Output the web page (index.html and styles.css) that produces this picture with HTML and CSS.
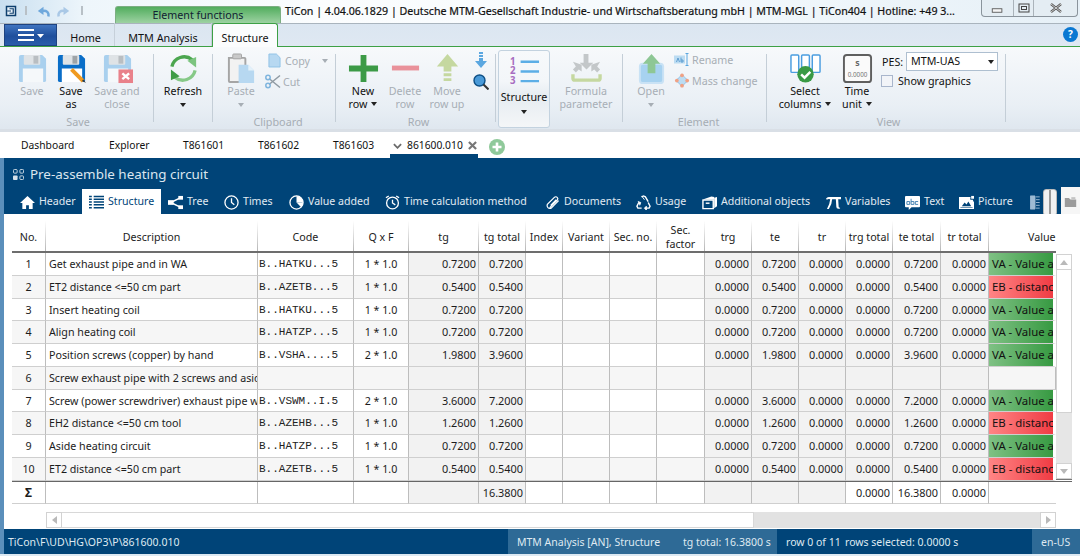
FILE: index.html
```html
<!DOCTYPE html>
<html lang="en">
<head>
<meta charset="utf-8">
<title>TiCon</title>
<link rel="stylesheet" href="styles.css">
</head>
<body>
<div class="app">
  <header class="titlebar">
    <svg class="qa-app" viewBox="0 0 16 16"><rect x="1" y="1" width="14" height="14" fill="#0d3f6e"/><rect x="3" y="3" width="10" height="10" fill="#e8f2fa"/><path d="M6 5h5v6H6M3 8h5" fill="none" stroke="#0d3f6e" stroke-width="1.6"/></svg>
    <span class="qa-sep"></span>
    <svg class="qa-undo" viewBox="0 0 16 16"><path d="M14 13c1-5-2-8-8-7" fill="none" stroke="#6fa8dc" stroke-width="3"/><path d="M8 1L1 6l7 5z" fill="#6fa8dc"/></svg>
    <svg class="qa-redo" viewBox="0 0 16 16"><path d="M2 13c-1-5 2-8 8-7" fill="none" stroke="#a9c8e6" stroke-width="3"/><path d="M8 1l7 5-7 5z" fill="#a9c8e6"/></svg>
    <span class="qa-sep"></span>
    <div class="ctx-tab">Element functions</div>
    <div class="title-text">TiCon | 4.04.06.1829 | Deutsche MTM-Gesellschaft Industrie- und Wirtschaftsberatung mbH | MTM-MGL | TiCon404 | Hotline: +49 3...</div>
    <div class="winbtns">
      <span class="wb wb-min"><svg viewBox="0 0 14 8"><rect x="1" y="2" width="11" height="4" fill="#f4f4f4" stroke="#555"/></svg></span>
      <span class="wb wb-max"><svg viewBox="0 0 12 10"><rect x="1" y="1" width="10" height="8" fill="none" stroke="#444"/><rect x="3.500" y="3.500" width="5" height="3" fill="none" stroke="#444"/></svg></span>
      <span class="wb wb-close"><svg viewBox="0 0 12 10"><path d="M1 1l10 8M11 1L1 9" stroke="#555" stroke-width="2.400"/><path d="M1 1l10 8M11 1L1 9" stroke="#eee" stroke-width="0.800"/></svg></span>
    </div>
  </header>

  <nav class="tabrow">
    <div class="menubtn"><svg viewBox="0 0 26 12"><path d="M0 1h16M0 6h16M0 11h16" stroke="#fff" stroke-width="2"/><path d="M19 5h7l-3.500 4z" fill="#fff"/></svg></div>
    <div class="rtab rtab-home">Home</div>
    <div class="rtab rtab-mtm">MTM Analysis</div>
    <div class="rtab rtab-on">Structure</div>
    <div class="help">?</div>
  </nav>

  <section class="ribbon">
    <div class="grp g-save">
      <div class="btn off"><svg class="ico" viewBox="0 0 32 32"><path d="M2 4a2 2 0 0 1 2-2h22l4 4v22a2 2 0 0 1-2 2H4a2 2 0 0 1-2-2z" fill="#a9d0ee"/><rect x="7" y="2" width="17" height="10" rx="1" fill="#dfe3e6"/><rect x="17" y="3" width="5" height="8" fill="#b9bec2"/><rect x="6" y="16" width="21" height="14" fill="#f5f8fa"/></svg><span>Save</span></div>
      <div class="btn"><svg class="ico" viewBox="0 0 32 32"><path d="M2 4a2 2 0 0 1 2-2h22l4 4v22a2 2 0 0 1-2 2H4a2 2 0 0 1-2-2z" fill="#0a6ec8"/><rect x="7" y="2" width="17" height="10" rx="1" fill="#dfe3e6"/><rect x="17" y="3" width="5" height="8" fill="#9ea4a8"/><rect x="6" y="16" width="21" height="14" fill="#fff"/><path d="M16 17l12 12" stroke="#f09a20" stroke-width="4"/><path d="M28 27l3 4-4-2z" fill="#333"/></svg><span>Save<br>as</span></div>
      <div class="btn off"><svg class="ico" viewBox="0 0 32 32"><path d="M2 4a2 2 0 0 1 2-2h22l4 4v22a2 2 0 0 1-2 2H4a2 2 0 0 1-2-2z" fill="#a9d0ee"/><rect x="7" y="2" width="17" height="10" rx="1" fill="#dfe3e6"/><rect x="17" y="3" width="5" height="8" fill="#b9bec2"/><rect x="6" y="16" width="21" height="14" fill="#f5f8fa"/><rect x="17" y="17" width="15" height="14" fill="#e9818a"/><path d="M21 21l7 6M28 21l-7 6" stroke="#fff" stroke-width="2.500"/></svg><span>Save and<br>close</span></div>
      <div class="glabel">Save</div>
    </div>
    <i class="sep"></i>
    <div class="grp g-refresh">
      <div class="btn"><svg class="ico" viewBox="0 0 32 32"><path d="M25 7A13 13 0 0 0 4 14" fill="none" stroke="#4ca64f" stroke-width="3.400"/><path d="M7 25a13 13 0 0 0 21-7" fill="none" stroke="#86c987" stroke-width="3.400"/><path d="M3 28l0-11 9 7z" fill="#3f9c45"/><path d="M29 4l0 11-9-7z" fill="#7cc47f"/></svg><span>Refresh</span><b class="arr"></b></div>
    </div>
    <i class="sep"></i>
    <div class="grp g-clip">
      <div class="btn off"><svg class="ico" viewBox="0 0 32 32"><path d="M3 5h16a1 1 0 0 1 1 1v24H4a1 1 0 0 1-1-1z" fill="#f2f2f2" stroke="#a5a5a5" stroke-width="2"/><rect x="7" y="1" width="9" height="5" rx="1" fill="#c9c9c9" stroke="#a5a5a5"/><path d="M13 12h10l6 6v13H13z" fill="#b7d8f1"/><path d="M23 12v6h6z" fill="#e4f1fa"/></svg><span>Paste</span><b class="arr"></b></div>
      <div class="smalls">
        <div class="sm off sm-copy"><svg class="ic14" viewBox="0 0 14 16"><path d="M1 1h8l4 4v10H1z" fill="#b7d8f1" stroke="#8fc1e6"/></svg><span>Copy</span><b class="arr arr-copy"></b></div>
        <div class="sm off sm-cut"><svg class="ic16" viewBox="0 0 16 14"><path d="M15 1L4 10M15 13L4 4" stroke="#8f9aa3" stroke-width="1.500"/><circle cx="3" cy="3" r="2.200" fill="none" stroke="#7fb5de" stroke-width="1.500"/><circle cx="3" cy="11" r="2.200" fill="none" stroke="#7fb5de" stroke-width="1.500"/></svg><span>Cut</span></div>
      </div>
      <div class="glabel">Clipboard</div>
    </div>
    <i class="sep"></i>
    <div class="grp g-row">
      <div class="btn"><svg class="ico" viewBox="0 0 32 32"><path d="M13 2h6v11h12v6H19v11h-6V19H1v-6h12z" fill="#3c9a46"/></svg><span>New<br>row<b class="arr arr-in"></b></span></div>
      <div class="btn off"><svg class="ico" viewBox="0 0 32 32"><rect x="2" y="13" width="28" height="5" fill="#e9919a"/></svg><span>Delete<br>row</span></div>
      <div class="btn off"><svg class="ico" viewBox="0 0 32 32"><path d="M16 1l11 13h-7v5h-8v-5H5z" fill="#c5d8a0"/><path d="M12 21h8v3h-8zM12 26h8v3h-8z" fill="#c5d8a0"/></svg><span>Move<br>row up</span></div>
      <div class="tools">
        <svg class="tool" viewBox="0 0 16 16"><path d="M6 0h4v2H6zM6 3h4v2H6zM6 6h4v3h4l-6 7-6-7h4z" fill="#5ba7e0"/></svg>
        <svg class="tool" viewBox="0 0 16 16"><circle cx="6.500" cy="6.500" r="5.500" fill="#4a9ad8" stroke="#0d4f85" stroke-width="1.400"/><path d="M10.500 10.500l5 5" stroke="#333" stroke-width="2"/></svg>
      </div>
      <div class="glabel">Row</div>
    </div>
    <i class="sep"></i>
    <div class="grp g-struct">
      <div class="bigbtn"><svg class="ico ico-s" viewBox="0 0 32 32"><text x="1" y="10" class="num123">1</text><text x="1" y="20" class="num123">2</text><text x="1" y="30" class="num123">3</text><path d="M12 7h19M12 17h19M12 27h19" stroke="#5caee6" stroke-width="2.500"/></svg><span>Structure</span><b class="arr"></b></div>
      <div class="btn off"><svg class="ico" viewBox="0 0 32 32"><path d="M13 1h5v9h5l-7 7-7-7h4z" fill="#c3c7c9"/><path d="M2 9l9 3 0 7-3-2-3 3-3-3 3-3z" fill="#c3c7c9"/><path d="M30 9l-9 3 0 7 3-2 3 3 3-3-3-3z" fill="#c3c7c9"/><path d="M2 22v4a2 2 0 0 0 2 2h24a2 2 0 0 0 2-2v-4" fill="none" stroke="#c5d8a0" stroke-width="3.500"/></svg><span>Formula<br>parameter</span></div>
    </div>
    <i class="sep"></i>
    <div class="grp g-elem">
      <div class="btn off"><svg class="ico" viewBox="0 0 32 32"><rect x="4" y="11" width="24" height="20" rx="3" fill="#a7d2f0" stroke="#c9e2f5" stroke-width="2"/><path d="M16 1l9 10h-5v10h-8V11H7z" fill="#8ec795"/></svg><span>Open</span><b class="arr"></b></div>
      <div class="smalls">
        <div class="sm off sm-ren"><svg class="ic16" viewBox="0 0 16 14"><rect x="0" y="3" width="11" height="8" fill="#bcdcf2"/><path d="M2.500 9.500l1.500-4 1.500 4M7 5v4.500h2v-2H7" fill="none" stroke="#4a8fc9" stroke-width="0.800"/><path d="M13 1v12M11.500 1h3M11.500 13h3" stroke="#5ba7e0"/></svg><span>Rename</span></div>
        <div class="sm off sm-mass"><svg class="ic16" viewBox="0 0 16 16"><path d="M8 1l3 4 4 3-4 3-3 4-3-4-4-3 4-3z" fill="#bcdcf2" stroke="#8fc1e6"/><circle cx="8" cy="2.500" r="2" fill="#f0a184"/><circle cx="8" cy="13.500" r="2" fill="#f0a184"/><circle cx="2.500" cy="8" r="2" fill="#f0a184"/><circle cx="13.500" cy="8" r="2" fill="#f0a184"/></svg><span>Mass change</span></div>
      </div>
      <div class="glabel">Element</div>
    </div>
    <i class="sep"></i>
    <div class="grp g-view">
      <div class="btn"><svg class="ico ico-w" viewBox="0 0 32 32"><rect x="1" y="2" width="8" height="18" rx="1" fill="#fff" stroke="#4a9de0" stroke-width="1.500"/><rect x="12" y="2" width="8" height="18" rx="1" fill="#fff" stroke="#4a9de0" stroke-width="1.500"/><rect x="23" y="2" width="8" height="18" rx="1" fill="#fff" stroke="#4a9de0" stroke-width="1.500"/><circle cx="16" cy="22" r="8.500" fill="#3a9a46"/><path d="M11.500 22l3.500 3.500 6-6" fill="none" stroke="#fff" stroke-width="2.500"/></svg><span>Select<br>columns<b class="arr arr-in"></b></span></div>
      <div class="btn"><svg class="ico" viewBox="0 0 32 32"><rect x="2" y="2" width="28" height="28" rx="3" fill="#fafafa" stroke="#5f5f5f" stroke-width="2"/><text x="16" y="13" class="t-s">s</text><text x="16" y="25" class="t-n">0.0000</text></svg><span>Time<br>unit<b class="arr arr-in"></b></span></div>
      <div class="pes">
        <div class="pes-row"><label class="pes-l">PES:</label><div class="select">MTM-UAS<b class="arr arr-sel"></b></div></div>
        <div class="chk-row"><i class="chk"></i><span>Show graphics</span></div>
      </div>
      <div class="glabel">View</div>
    </div>
    <i class="sep"></i>
  </section>

  <div class="doctabs">
    <div class="dt dt1">Dashboard</div>
    <div class="dt dt2">Explorer</div>
    <div class="dt dt3">T861601</div>
    <div class="dt dt4">T861602</div>
    <div class="dt dt5">T861603</div>
    <div class="dt dt-on">
      <svg class="chev" viewBox="0 0 10 6"><path d="M1 1l4 4 4-4" fill="none" stroke="#6b6b6b" stroke-width="2"/></svg>
      <span>861600.010</span>
      <svg class="xx" viewBox="0 0 10 10"><path d="M1 1l8 8M9 1L1 9" stroke="#777" stroke-width="2.400"/></svg>
    </div>
    <svg class="plus" viewBox="0 0 16 16"><circle cx="8" cy="8" r="8" fill="#8fc99a"/><path d="M8 3.500v9M3.500 8h9" stroke="#fff" stroke-width="2.600"/></svg>
  </div>

  <section class="band">
    <div class="band-title">
      <svg class="squares" viewBox="0 0 12 12"><rect x="0.500" y="0.500" width="4" height="4" rx="1" fill="none" stroke="#d5e1ea"/><rect x="7.500" y="0.500" width="4" height="4" rx="1" fill="none" stroke="#d5e1ea"/><rect x="0" y="7" width="5" height="5" rx="1" fill="#d5e1ea"/><rect x="7.500" y="7.500" width="4" height="4" rx="1" fill="none" stroke="#d5e1ea"/></svg>
      <h1>Pre-assemble heating circuit</h1>
    </div>
    <div class="nav">
      <div class="ni"><svg viewBox="0 0 16 16"><path d="M8 1L0 8.500h2.500V15h4v-4h3v4h4V8.500H16z" fill="#fff"/></svg><span>Header</span></div>
      <div class="ni ni-on"><svg viewBox="0 0 16 16"><path d="M0 1.500h3M5 1.500h11M0 4.500h3M5 4.500h11M0 7.500h3M5 7.500h11M0 10.500h3M5 10.500h11M0 13.500h3M5 13.500h11" stroke="#004478" stroke-width="1.600"/></svg><span>Structure</span></div>
      <div class="ni"><svg viewBox="0 0 16 16"><path d="M3 8l10-5M3 8l10 5" stroke="#fff" stroke-width="1.500"/><rect x="0" y="5.500" width="6" height="5" fill="#fff"/><rect x="11" y="1" width="5" height="4" fill="#fff"/><rect x="11" y="11" width="5" height="4" fill="#fff"/></svg><span>Tree</span></div>
      <div class="ni"><svg viewBox="0 0 16 16"><circle cx="8" cy="8" r="7" fill="none" stroke="#fff" stroke-width="1.400"/><path d="M8 3.500V8l3 2.500" fill="none" stroke="#fff" stroke-width="1.400"/></svg><span>Times</span></div>
      <div class="ni"><svg viewBox="0 0 16 16"><circle cx="8" cy="8" r="7" fill="none" stroke="#fff" stroke-width="1.400"/><path d="M8 8V1a7 7 0 0 1 7 7z" fill="#fff"/><path d="M8 8l7 0a7 7 0 0 1-2 5z" fill="#fff"/></svg><span>Value added</span></div>
      <div class="ni"><svg viewBox="0 0 16 16"><circle cx="8" cy="8.500" r="6.300" fill="none" stroke="#fff" stroke-width="1.400"/><path d="M8 5v3.500l3 2M1 3l3-2M12 1l3 2" fill="none" stroke="#fff" stroke-width="1.400"/></svg><span>Time calculation method</span></div>
      <div class="ni"><svg viewBox="0 0 16 16"><path d="M5 13.500l8-8a2 2 0 0 0-3-3L2.500 10a3 3 0 0 0 4 4l8-8M6 11l6-6" fill="none" stroke="#fff" stroke-width="1.300"/></svg><span>Documents</span></div>
      <div class="ni"><svg viewBox="0 0 16 16"><path d="M6 2l2-1 2 1 3 5M3 8L1 12l1 2h4M10 14h4l1-2-2-4" fill="none" stroke="#fff" stroke-width="1.500"/><path d="M6 1l3 4M2 7l3 1-1 3M11 12l-2 2 2 2z" fill="#fff" stroke="#fff"/></svg><span>Usage</span></div>
      <div class="ni"><svg viewBox="0 0 16 16"><path d="M1 5.500h11v9H1z" fill="none" stroke="#fff" stroke-width="1.500"/><path d="M0 5l10-3.500 3 .5v3z" fill="#fff"/><path d="M13 3l3-1v10l-3 2z" fill="#fff"/><rect x="4" y="8" width="4" height="1.500" fill="#fff"/></svg><span>Additional objects</span></div>
      <div class="ni"><svg viewBox="0 0 16 16"><path d="M0 4q1-2 3-2h13v2.500h-3l.5 8q0 1 1.500 1v1q-4 1-4-2l-.5-8H6.500Q6.500 10 3 15H1Q4 10 4.500 4.500 2 4 1 5z" fill="#fff"/></svg><span>Variables</span></div>
      <div class="ni"><svg viewBox="0 0 16 16"><path d="M1 1h14a1 1 0 0 1 1 1v10a1 1 0 0 1-1 1H7l-3 3v-3H1a1 1 0 0 1-1-1V2a1 1 0 0 1 1-1z" fill="#fff"/><path d="M2 7h3v3H2zM6.500 4v6h3V7h-3M14 7h-3v3h3" fill="none" stroke="#3f7fb0" stroke-width="1"/></svg><span>Text</span></div>
      <div class="ni"><svg viewBox="0 0 16 16"><path d="M0 2h12v1.500H1.500v10h13V7H16v8H0z" fill="#fff"/><path d="M1 2h11v3h3v8H1z" fill="#fff"/><path d="M3 12l3-4 2 2 2-3 3 5z" fill="#004478"/><rect x="13" y="1" width="3" height="3" fill="#fff"/></svg><span>Picture</span></div>
      <div class="ni"><svg class="ni-last" viewBox="0 0 10 16"><path d="M0 1h5v14H0zM6 2h4M6 5h4M6 8h4M6 11h4M6 14h4" fill="#9dbbd4" stroke="#9dbbd4"/></svg></div>
      <div class="split"><i></i></div>
      <div class="side"><svg viewBox="0 0 16 14"><path d="M1 2h5l2 2h7v9H1z" fill="#9b9b9b"/><path d="M9 1h5v3H9z" fill="#c4c4c4"/></svg></div>
    </div>
  </section>

  <section class="gridwrap">
    <div class="r hd">
      <div>No.</div><div>Description</div><div>Code</div><div>Q x F</div><div>tg</div><div>tg total</div><div>Index</div><div>Variant</div><div>Sec. no.</div><div>Sec.<br>factor</div><div>trg</div><div>te</div><div>tr</div><div>trg total</div><div>te total</div><div>tr total</div><div class="hv">Value added</div>
    </div>
    <div class="bodywrap">
      <div class="rows">
        <div class="r"><div class="ctr">1</div><div>Get exhaust pipe and in WA</div><div class="m">B..HATKU...5</div><div class="ctr">1 * 1.0</div><div class="g n">0.7200</div><div class="g n">0.7200</div><div></div><div></div><div></div><div></div><div class="g n">0.0000</div><div class="g n">0.7200</div><div class="g n">0.0000</div><div class="g n">0.0000</div><div class="g n">0.7200</div><div class="g n">0.0000</div><div class="va">VA - Value added</div></div>
        <div class="r ev"><div class="ctr">2</div><div>ET2 distance &lt;=50 cm part</div><div class="m">B..AZETB...5</div><div class="ctr">1 * 1.0</div><div class="g n">0.5400</div><div class="g n">0.5400</div><div></div><div></div><div></div><div></div><div class="g n">0.0000</div><div class="g n">0.5400</div><div class="g n">0.0000</div><div class="g n">0.0000</div><div class="g n">0.5400</div><div class="g n">0.0000</div><div class="eb">EB - distance</div></div>
        <div class="r"><div class="ctr">3</div><div>Insert heating coil</div><div class="m">B..HATKU...5</div><div class="ctr">1 * 1.0</div><div class="g n">0.7200</div><div class="g n">0.7200</div><div></div><div></div><div></div><div></div><div class="g n">0.0000</div><div class="g n">0.7200</div><div class="g n">0.0000</div><div class="g n">0.0000</div><div class="g n">0.7200</div><div class="g n">0.0000</div><div class="va">VA - Value added</div></div>
        <div class="r ev"><div class="ctr">4</div><div>Align heating coil</div><div class="m">B..HATZP...5</div><div class="ctr">1 * 1.0</div><div class="g n">0.7200</div><div class="g n">0.7200</div><div></div><div></div><div></div><div></div><div class="g n">0.0000</div><div class="g n">0.7200</div><div class="g n">0.0000</div><div class="g n">0.0000</div><div class="g n">0.7200</div><div class="g n">0.0000</div><div class="va">VA - Value added</div></div>
        <div class="r"><div class="ctr">5</div><div>Position screws (copper) by hand</div><div class="m">B..VSHA....5</div><div class="ctr">2 * 1.0</div><div class="g n">1.9800</div><div class="g n">3.9600</div><div></div><div></div><div></div><div></div><div class="g n">0.0000</div><div class="g n">1.9800</div><div class="g n">0.0000</div><div class="g n">0.0000</div><div class="g n">3.9600</div><div class="g n">0.0000</div><div class="va">VA - Value added</div></div>
        <div class="r ev"><div class="ctr">6</div><div>Screw exhaust pipe with 2 screws and aside</div><div></div><div></div><div class="g"></div><div class="g"></div><div></div><div></div><div></div><div></div><div class="g"></div><div class="g"></div><div class="g"></div><div class="g"></div><div class="g"></div><div class="g"></div><div></div></div>
        <div class="r"><div class="ctr">7</div><div>Screw (power screwdriver) exhaust pipe with 2 screws</div><div class="m">B..VSWM..I.5</div><div class="ctr">2 * 1.0</div><div class="g n">3.6000</div><div class="g n">7.2000</div><div></div><div></div><div></div><div></div><div class="g n">0.0000</div><div class="g n">3.6000</div><div class="g n">0.0000</div><div class="g n">0.0000</div><div class="g n">7.2000</div><div class="g n">0.0000</div><div class="va">VA - Value added</div></div>
        <div class="r ev"><div class="ctr">8</div><div>EH2 distance &lt;=50 cm tool</div><div class="m">B..AZEHB...5</div><div class="ctr">1 * 1.0</div><div class="g n">1.2600</div><div class="g n">1.2600</div><div></div><div></div><div></div><div></div><div class="g n">0.0000</div><div class="g n">1.2600</div><div class="g n">0.0000</div><div class="g n">0.0000</div><div class="g n">1.2600</div><div class="g n">0.0000</div><div class="eb">EB - distance</div></div>
        <div class="r"><div class="ctr">9</div><div>Aside heating circuit</div><div class="m">B..HATZP...5</div><div class="ctr">1 * 1.0</div><div class="g n">0.7200</div><div class="g n">0.7200</div><div></div><div></div><div></div><div></div><div class="g n">0.0000</div><div class="g n">0.7200</div><div class="g n">0.0000</div><div class="g n">0.0000</div><div class="g n">0.7200</div><div class="g n">0.0000</div><div class="va">VA - Value added</div></div>
        <div class="r ev"><div class="ctr">10</div><div>ET2 distance &lt;=50 cm part</div><div class="m">B..AZETB...5</div><div class="ctr">1 * 1.0</div><div class="g n">0.5400</div><div class="g n">0.5400</div><div></div><div></div><div></div><div></div><div class="g n">0.0000</div><div class="g n">0.5400</div><div class="g n">0.0000</div><div class="g n">0.0000</div><div class="g n">0.5400</div><div class="g n">0.0000</div><div class="eb">EB - distance</div></div>
      </div>
      <div class="vscroll">
        <div class="sb-btn"><b class="tri tri-up"></b></div>
        <div class="vthumb"></div>
        <div class="sb-btn"><b class="tri tri-dn"></b></div>
      </div>
    </div>
    <div class="dbl"></div>
    <div class="r sum">
      <div class="ctr sigma">&Sigma;</div><div></div><div></div><div></div><div class="g"></div><div class="g n">16.3800</div><div></div><div></div><div></div><div></div><div class="g"></div><div class="g"></div><div class="g"></div><div class="n">0.0000</div><div class="n">16.3800</div><div class="n">0.0000</div><div class="last"></div>
    </div>
    <div class="hscroll">
      <div class="sb-btn h"><b class="tri tri-l"></b></div>
      <div class="hthumb"></div>
      <div class="sb-btn h"><b class="tri tri-r"></b></div>
    </div>
  </section>

  <footer class="status">
    <div class="st-path">TiCon\F\UD\HG\OP3\P\861600.010</div>
    <div class="st-a"><span class="st-a1">MTM Analysis [AN], Structure</span><span>tg total: 16.3800 s</span></div>
    <div class="st-b"><span class="st-b1">row 0 of 11</span><span>rows selected: 0.0000 s</span></div>
    <div class="st-c">en-US</div>
  </footer>
  <div class="foot"></div>
</div>
</body>
</html>
```

FILE: styles.css
```css
* { box-sizing: border-box; }
html, body { margin: 0; padding: 0; }
body {
  width: 1080px; height: 556px; overflow: hidden;
  font-family: "Noto Sans", "Open Sans", sans-serif;
  font-size: 10.700px; color: #1a1a1a; background: #fff;
}
svg { display: block; flex: none; }
.app { display: flex; flex-direction: column; width: 1080px; height: 556px; overflow: hidden; background: #5b8fbb; }

/* title bar */
.titlebar {
  height: 23px; display: flex; align-items: flex-start; position: relative;
  background: linear-gradient(90deg, #c9dff0 0, #eef6fb 8%, #fbfdfe 30%, #f5fafd 60%, #e6f0f7 100%);
  padding-left: 5px;
}
.qa-app { width: 12px; height: 12px; margin-top: 5px; }
.qa-sep { width: 2px; height: 9px; background: #b8c0c6; margin: 6px 0 0 8px; }
.qa-undo { width: 15px; height: 13px; margin: 6px 0 0 9px; }
.qa-redo { width: 15px; height: 13px; margin: 6px 0 0 5px; }
.qa-redo + .qa-sep { margin-left: 10px; }
.ctx-tab {
  position: absolute; left: 115px; top: 6px; width: 166px; height: 17px;
  background: linear-gradient(#52ad5e, #9dd2a2);
  border: 1px solid #7cae82; border-bottom: 0; border-radius: 3px 3px 0 0;
  text-align: center; font-size: 10.700px; line-height: 17px; color: #123;
}
.title-text {
  position: absolute; left: 285px; top: 3px; font-size: 10.650px; line-height: 17px;
  color: #111; white-space: nowrap; -webkit-text-stroke: 0.2px #111;
}
.winbtns {
  position: absolute; left: 981px; top: -1px; width: 97px; height: 18px; display: flex;
  border: 1px solid #8a949c; border-top: 0; border-radius: 0 0 4px 4px; background: #e4edf3;
}
.wb { display: flex; align-items: center; justify-content: center; border-right: 1px solid #aab3ba; }
.wb-min { width: 32px; } .wb-max { width: 20px; } .wb-close { flex: 1; border-right: 0; }
.wb-min svg { width: 13px; height: 7px; margin-top: 5px; }
.wb-max svg { width: 12px; height: 10px; }
.wb-close svg { width: 12px; height: 10px; }

/* ribbon tabs */
.tabrow {
  height: 24px; display: flex; align-items: flex-end; padding-left: 4px; position: relative;
  background: linear-gradient(#dbe6f1, #dfe8f2); border-top: 1px solid #a9b4bd;
  border-bottom: 1px solid #3da045;
}
.menubtn {
  width: 53px; height: 22px; background: linear-gradient(#3f74c0, #1f4f9c 55%, #2a5cab);
  border: 1px solid #1e4380; display: flex; align-items: center; justify-content: center;
}
.menubtn svg { width: 26px; height: 12px; }
.rtab { height: 23px; text-align: center; font-size: 10.800px; line-height: 29px; color: #111; }
.rtab-home { width: 58px; border-right: 1px solid #c6d0da; }
.rtab-mtm { width: 97px; border-right: 1px solid #c6d0da; }
.rtab-on {
  width: 66px; height: 24px; margin-bottom: -1px; line-height: 28px; background: #fbfcfd;
  border: 1px solid #3da045; border-bottom: 0; border-radius: 3px 3px 0 0;
}
.help {
  position: absolute; left: 1063px; top: 3px; width: 15px; height: 15px; border-radius: 50%;
  background: #0a78d2; color: #fff; font-weight: 700; font-size: 10px; line-height: 15px; text-align: center;
}

/* ribbon */
.ribbon {
  height: 85px; display: flex; padding-left: 4px;
  background: linear-gradient(#f7f9fb, #e9eff5 72%, #dfe7ef);
  border-bottom: 3px solid #d9dfe6;
}
.sep { width: 1px; margin: 7px 0 7px; background: #c4ced7; flex: none; }
.grp { display: grid; grid-template-rows: 68px 13px; flex: none; }
.glabel { grid-column: 1 / -1; text-align: center; color: #a6adb4; font-size: 10.800px; line-height: 13px; }
.g-save { width: 149px; grid-template-columns: 40px 38px 54px; padding-left: 8px; }
.g-refresh { width: 58px; grid-template-columns: 1fr; }
.g-clip { width: 122px; grid-template-columns: 40px 1fr; padding-left: 8px; }
.g-row { width: 159px; grid-template-columns: 42px 42px 42px 27px; padding-left: 6px; }
.g-struct { width: 126px; grid-template-columns: 52px 64px; grid-template-rows: 1fr; padding-left: 2px; column-gap: 4px; }
.g-elem { width: 143px; grid-template-columns: 40px 1fr; padding-left: 8px; }
.g-view { width: 238px; grid-template-columns: 66px 38px 1fr; padding-left: 5px; }
.btn {
  display: flex; flex-direction: column; align-items: center; padding-top: 6px;
  text-align: center; font-size: 10.700px; line-height: 12.500px; color: #111; white-space: nowrap;
}
.ico { width: 31px; height: 31px; margin-bottom: 1px; }
.ico-w { width: 31px; }
.btn.off, .sm.off { color: #a7aeb5; }
.arr { display: block; width: 0; height: 0; border: 3px solid transparent; border-top: 4px solid #222; border-bottom: 0; margin-top: 5px; }
.off .arr { border-top-color: #a7aeb5; }
.arr-in { display: inline-block; margin: 0 0 1px 4px; vertical-align: middle; }
.smalls { padding: 6px 0 0 7px; display: flex; flex-direction: column; gap: 6px; }
.sm { display: flex; align-items: center; height: 15px; font-size: 10.700px; white-space: nowrap; }
.ic14 { width: 13px; height: 15px; margin-right: 4px; }
.ic16 { width: 16px; height: 15px; margin-right: 2px; }
.sm-cut { margin-left: -3px; }
.sm-copy span { margin-right: 12px; }
.arr-copy { margin-top: 0; }
.sm-ren, .sm-mass { margin-left: -4px; }
.sm-ren { margin-top: -1px; }
.sm-mass { margin-top: 0; }
.tools { display: flex; flex-direction: column; gap: 6px; padding: 5px 0 0 5px; }
.tool { width: 16px; height: 16px; }
.bigbtn {
  display: flex; flex-direction: column; align-items: center; margin-top: 3px; height: 78px; padding-top: 4px;
  border: 1px solid #c3d2df; border-radius: 3px;
  background: linear-gradient(#f7f9fb 0, #f3f6f9 40%, #e6ecf1 60%, #f4f6f8 100%);
  font-size: 10.700px; line-height: 15px; color: #111; white-space: nowrap;
}
.ico-s { height: 31px; margin-bottom: 4px; }
.num123 { font-size: 10px; font-weight: 700; fill: #a86cc0; font-family: "Noto Sans", sans-serif; }
.t-s { font-size: 9px; font-weight: 700; fill: #666; text-anchor: middle; font-family: "Noto Sans", sans-serif; }
.t-n { font-size: 6.500px; fill: #777; text-anchor: middle; font-family: "Noto Sans", sans-serif; }
.pes { padding: 5px 0 0 6px; grid-column: 3; font-size: 10.700px; color: #111; }
.pes-row { display: flex; align-items: center; }
.pes-l { width: 24px; }
.select {
  width: 92px; height: 19px; border: 1px solid #aebfd0; background: #fff; padding-left: 4px;
  line-height: 16px; position: relative; font-size: 10.700px;
}
.arr-sel { position: absolute; right: 3px; top: 7px; margin: 0; border-width: 3px; border-top-width: 4px; }
.chk-row { display: flex; align-items: center; margin: 3px 0 0 -1px; gap: 5px; }
.chk { width: 12px; height: 12px; border: 1px solid #a9b6cc; background: #f2f4f8; }

/* document tabs */
.doctabs { height: 26px; display: flex; background: #fff; padding-left: 4px; position: relative; font-size: 10.300px; }
.dt { line-height: 27px; white-space: nowrap; color: #111; }
.dt1 { width: 105px; padding-left: 17px; }
.dt2 { width: 74px; }
.dt3 { width: 75px; }
.dt4 { width: 75px; }
.dt5 { width: 57px; }
.dt-on {
  width: 88px; height: 26px; display: flex; align-items: flex-start; position: relative;
  border-bottom: 4px solid #004478; padding-left: 3px;
}
.chev { width: 9px; height: 6px; margin-top: 11px; }
.dt-on span { margin-left: 5px; }
.xx { width: 9px; height: 9px; margin: 9px 0 0 5px; }
.plus { width: 16px; height: 16px; margin: 7px 0 0 11px; }

/* dark band */
.band { height: 56px; background: #004478; margin-left: 4px; display: flex; flex-direction: column; }
.band-title { height: 31px; display: flex; align-items: center; padding: 1px 0 0 9px; }
.squares { width: 11px; height: 11px; margin-right: 6px; }
.band-title h1 { margin: 0; font-weight: 400; font-size: 13.400px; color: #dbe6ef; white-space: nowrap; }
.nav {
  height: 25px; display: grid; color: #e0ebf3; font-size: 10.600px; padding-left: 9px;
  grid-template-columns: 69px 79px 56px 65px 96px 160px 91px 66px 124px 79px 54px 71px 20px 14px 23px;
}
.ni { display: flex; align-items: center; padding-left: 7px; gap: 4px; white-space: nowrap; padding-bottom: 1px; overflow: hidden; }
.ni span { margin-top: -2px; }
.ni svg { width: 15px; height: 15px; }
.ni svg.ni-last { width: 10px; height: 15px; }
.ni-on { background: #fff; color: #004478; }
.split { display: flex; justify-content: center; align-items: flex-end; }
.split i { width: 14px; height: 27px; background: linear-gradient(90deg, #f2f2f2 45%, #9a9a9a 45%, #9a9a9a 55%, #f2f2f2 55%); border: 1px solid #bbb; border-radius: 3px; display: block; }
.side { background: #f6f6f6; margin: -2px 0 0 4px; display: flex; align-items: center; justify-content: center; }
.side svg { width: 13px; height: 12px; }

/* grid */
.gridwrap { height: 315px; margin-left: 4px; padding-left: 8px; background: #fff; position: relative; }
.r {
  display: grid; height: 22.750px;
  grid-template-columns: 34px 212px 96px 55px 70px 47px 37px 47px 47px 48px 47px 47px 47px 47px 48px 48px 67px;
  width: 1044px;
}
.r > div {
  border-right: 1px solid #bdbdbd; border-bottom: 1px solid #cfcfcf;
  overflow: hidden; white-space: nowrap; line-height: 23px; padding: 0 3px; font-size: 10.700px; color: #1c1c1c;
}
.r.ev > div { background: #f6f6f6; }
.r > .g, .r.ev > .g { background: #f2f2f2; }
.r > .n { text-align: right; padding-right: 2px; font-size: 10.900px; line-height: 22px; }
.ctr { text-align: center; }
.r > .m { font-family: "Liberation Mono", monospace; font-size: 11px; padding-left: 1px; color: #222; line-height: 23px; }
.r > .va, .r.ev > .va { background: linear-gradient(90deg, #7fc184, #379a42); border-right: 3px solid #fff; padding-left: 3px; color: #111; font-size: 11.400px; line-height: 22px; }
.r > .eb, .r.ev > .eb { background: linear-gradient(90deg, #ff8585, #f03c44); border-right: 3px solid #fff; padding-left: 3px; color: #111; font-size: 11.400px; line-height: 22px; }
.hd { height: 39px; border-bottom: 2px solid #6d6d6d; }
.r.hd > div {
  border-right: 1px solid; border-image: linear-gradient(#fff 20%, #b3b3b3) 1;
  border-bottom: 0; text-align: center; padding: 17px 0 0;
  line-height: 13.500px; background: #fff;
}
.r.hd > div:nth-child(10) { padding-top: 10px; }
.r.hd > .hv { text-align: left; padding-left: 39px; border: 0; }
.bodywrap { display: flex; width: 1060px; }
.rows { width: 1044px; flex: none; }
.vscroll { width: 16px; margin-top: 1px; height: 225px; background: #e6e6e6; display: flex; flex-direction: column; }
.sb-btn { height: 16px; background: #fff; border: 1px solid #d2d2d2; display: flex; align-items: center; justify-content: center; flex: none; }
.vthumb { height: 143px; background: #fff; border: 1px solid #d2d2d2; border-top: 0; }
.vthumb + .sb-btn { margin-top: auto; }
.tri { width: 0; height: 0; border: 4px solid transparent; display: block; }
.tri-up { border-bottom: 5px solid #b9b9b9; border-top: 0; }
.tri-dn { border-top: 5px solid #b9b9b9; border-bottom: 0; }
.tri-l { border-right: 5px solid #b9b9b9; border-left: 0; }
.tri-r { border-left: 5px solid #b9b9b9; border-right: 0; }
.dbl { height: 2.500px; width: 1060px; background: #fff; border-bottom: 1px solid #666; margin-top: -1px; box-shadow: 0 -1px 0 #777; }
.r.sum { height: 22px; }
.r.sum > div { background: #fff; line-height: 22px; }
.r.sum > .g { background: #f2f2f2; }
.r.sum > .sigma { font-weight: 700; font-size: 12px; }
.r.sum > .last { border-right: 0; }
.hscroll { display: flex; margin: 8px 0 0 34px; width: 1010px; height: 16px; background: #e2e2e2; }
.sb-btn.h { width: 16px; height: 16px; }
.hthumb { width: 692px; background: #fff; border: 1px solid #d8d8d8; border-left: 0; }
.hthumb + .sb-btn { margin-left: auto; }

/* status */
.status { height: 25px; margin-left: 4px; display: flex; background: #004478; color: #dfe9f1; font-size: 10.500px; line-height: 27px; white-space: nowrap; }
.st-path { width: 504px; padding-left: 4px; }
.st-a { width: 269px; background: #2e6a96; padding-left: 9px; display: flex; }
.st-a1 { width: 166px; }
.st-b { width: 255px; padding-left: 9px; display: flex; }
.st-b1 { width: 59px; }
.st-c { flex: 1; background: #2e6a96; padding-left: 9px; }
.foot { height: 2px; background: #dce9f3; }
```
